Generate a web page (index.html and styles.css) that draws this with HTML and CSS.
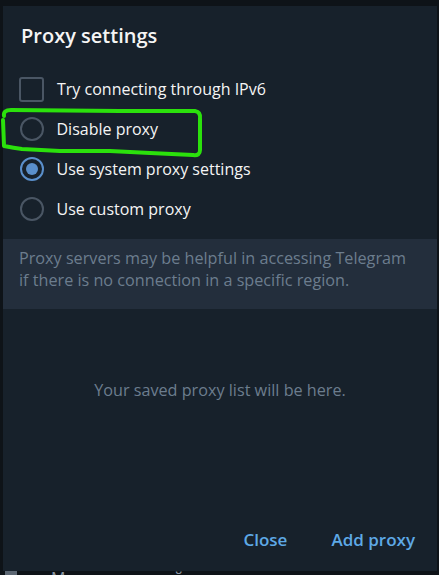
FILE: index.html
```html
<!DOCTYPE html>
<html>
<head>
<meta charset="utf-8">
<link rel="stylesheet" href="styles.css">
</head>
<body>
<div class="screen">
  <div class="dialog">
    <h1 class="title">Proxy settings</h1>
    <div class="options">
      <div class="row">
        <span class="check"></span>
        <span class="label">Try connecting through IPv6</span>
      </div>
      <div class="row">
        <span class="radio"></span>
        <span class="label">Disable proxy</span>
      </div>
      <div class="row">
        <span class="radio on"></span>
        <span class="label">Use system proxy settings</span>
      </div>
      <div class="row">
        <span class="radio"></span>
        <span class="label">Use custom proxy</span>
      </div>
    </div>
    <div class="info">Proxy servers may be helpful in accessing Telegram<br>if there is no connection in a specific region.</div>
    <div class="empty">Your saved proxy list will be here.</div>
    <div class="buttons">
      <span class="btn">Close</span>
      <span class="btn">Add proxy</span>
    </div>
  </div>
  <div class="under"><span class="under-icon"></span><span class="under-text">Международный</span></div>
  <svg class="mark" width="439" height="575" viewBox="0 0 439 575">
    <path d="M4,116 Q3,110 11,110 L120,111 L195,111 Q201,112 200,119 L200,150 Q200,156 193,155 L150,153 L110,151 L60,151 L22,149 Q14,148 4,146 L3,120" fill="none" stroke="#2be10c" stroke-width="4" stroke-linejoin="round" stroke-linecap="round"/>
  </svg>
</div>
</body>
</html>
```
FILE: styles.css
```css
html, body {
  margin: 0;
  padding: 0;
}
body {
  background: #0e1318;
  font-family: "Open Sans", "Noto Sans", sans-serif;
  width: 439px;
  height: 575px;
  overflow: hidden;
}
.screen {
  position: relative;
  width: 439px;
  height: 575px;
  padding-top: 6px;
  box-sizing: border-box;
}
.dialog {
  margin-left: 3px;
  margin-right: 2px;
  height: 565px;
  background: #17212b;
  display: flex;
  flex-direction: column;
}
.title {
  margin: 0;
  padding: 16px 0 0 18px;
  font-size: 20px;
  font-weight: 600;
  line-height: 28px;
  color: #f5f5f5;
}
.options {
  margin-top: 19px;
  display: flex;
  flex-direction: column;
}
.row {
  height: 40px;
  display: flex;
  align-items: center;
  padding-left: 16px;
}
.check {
  width: 21px;
  height: 21px;
  border: 2px solid #4a5664;
  border-radius: 3px;
  flex: none;
}
.radio {
  width: 20px;
  height: 20px;
  border: 2px solid #4a5664;
  border-radius: 50%;
  flex: none;
  position: relative;
  margin-left: 0.5px;
}
.radio.on {
  border-color: #5a8fcb;
}
.radio.on::after {
  content: "";
  position: absolute;
  left: 4px;
  top: 4px;
  width: 12px;
  height: 12px;
  border-radius: 50%;
  background: #5a8fcb;
}
.label {
  margin-left: 13px;
  font-size: 16px;
  color: #f5f5f5;
  line-height: 22px;
}
.info {
  margin-top: 10px;
  background: #232e3c;
  padding: 8px 0 18px 16px;
  font-size: 16.2px;
  line-height: 22px;
  color: #6c7d8e;
}
.empty {
  margin-top: 70px;
  text-align: center;
  font-size: 16.2px;
  line-height: 22px;
  color: #6c7d8e;
}
.buttons {
  margin-top: auto;
  margin-bottom: 20px;
  display: flex;
  justify-content: flex-end;
  gap: 44px;
  padding-right: 22px;
}
.btn {
  font-size: 17px;
  font-weight: 600;
  line-height: 22px;
  color: #5ea9e6;
}
.under {
  height: 4px;
  overflow: hidden;
  display: flex;
  align-items: flex-start;
  gap: 34px;
  padding-left: 5px;
}
.under-icon {
  width: 12px;
  height: 4px;
  background: #5c6773;
}
.under-text {
  margin-top: -1px;
  font-size: 16px;
  line-height: 16px;
  color: #8d98a4;
}
.mark {
  position: absolute;
  left: 0;
  top: 0;
  pointer-events: none;
}
```
